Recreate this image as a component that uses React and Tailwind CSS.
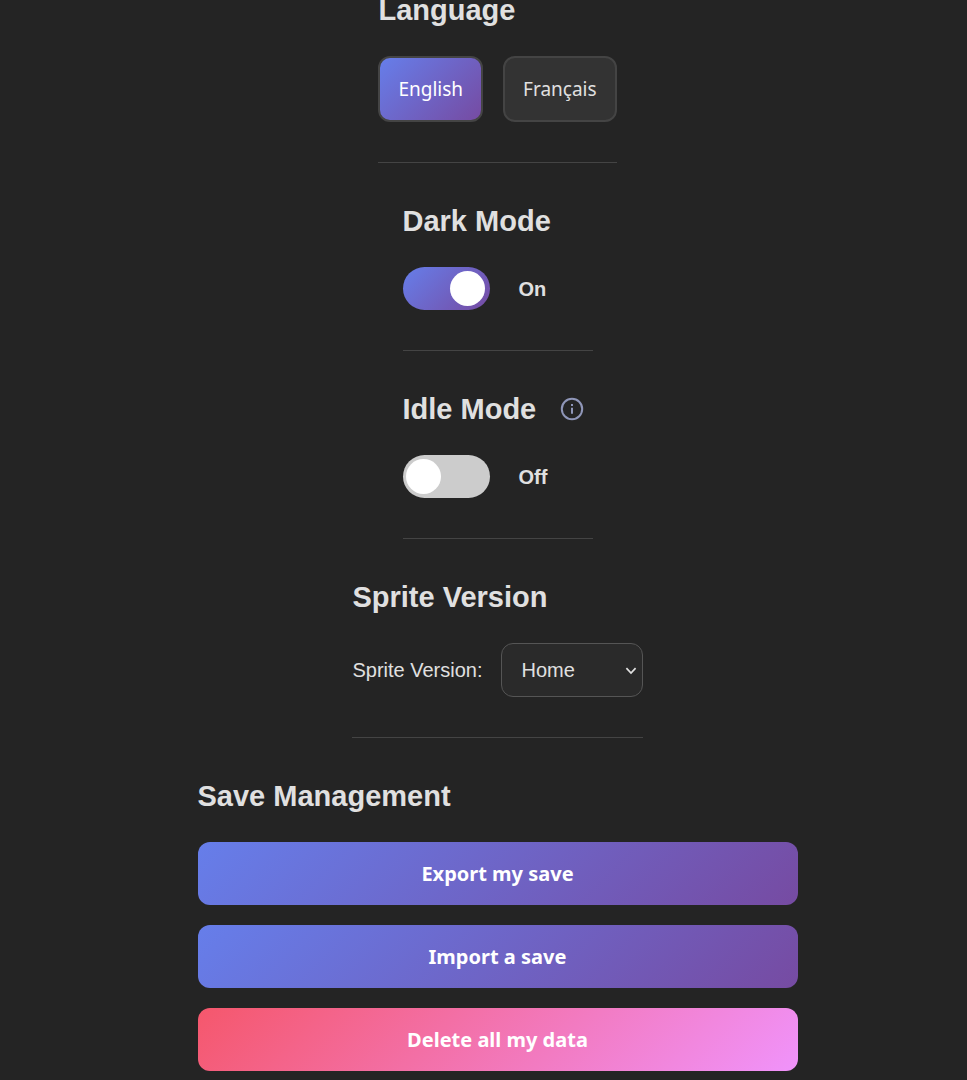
import React, { useState } from "react";

const Section = ({ title, info, last, className = "", children }) => (
  <section
    className={`max-w-full ${
      last ? "" : "mb-10 border-b border-[#444444] pb-10"
    } ${className}`}
  >
    <div className="mb-7 flex items-center gap-6">
      <h2 className="text-[29px] leading-9 font-bold">{title}</h2>
      {info}
    </div>
    {children}
  </section>
);

const Toggle = ({ label, checked, onChange }) => (
  <label className="flex cursor-pointer items-center gap-[29px]">
    <input
      type="checkbox"
      role="switch"
      aria-label={label}
      className="peer sr-only"
      checked={checked}
      onChange={(e) => onChange(e.target.checked)}
    />
    <span
      className={`flex h-[43px] w-[87px] items-center rounded-full pr-[5px] pl-[3px] peer-focus-visible:outline-2 ${
        checked
          ? "justify-end bg-[linear-gradient(135deg,#667eea_0%,#764ba2_100%)]"
          : "justify-start bg-[#cccccc]"
      }`}
    >
      <span className="size-[35px] rounded-full bg-white" />
    </span>
    <span className="text-[20px] leading-6 font-bold">
      {checked ? "On" : "Off"}
    </span>
  </label>
);

const languages = [
  { code: "en", label: "English" },
  { code: "fr", label: "Français" },
];

const saveActions = [
  { key: "export", label: "Export my save" },
  { key: "import", label: "Import a save" },
  { key: "delete", label: "Delete all my data", danger: true },
];

const InfoButton = () => (
  <button type="button" aria-label="About idle mode" className="text-[#8f96b8]">
    <svg
      className="size-6"
      viewBox="0 0 24 24"
      fill="none"
      stroke="currentColor"
      strokeWidth="2"
    >
      <circle cx="12" cy="12" r="10.2" />
      <path d="M12 10.8v6M12 7v2.1" />
    </svg>
  </button>
);

const App = () => {
  const [language, setLanguage] = useState("en");
  const [darkMode, setDarkMode] = useState(true);
  const [idleMode, setIdleMode] = useState(false);
  const [sprite, setSprite] = useState("home");

  return (
    <div className="min-h-screen overflow-hidden bg-[#242424] font-['Liberation_Sans',Arial,sans-serif] text-[#e0e0e0]">
      <main className="-mt-2 flex flex-col items-center pl-7">
        <Section title="Language">
          <div className="flex gap-5">
            {languages.map((lang) => (
              <button
                key={lang.code}
                type="button"
                aria-pressed={language === lang.code}
                onClick={() => setLanguage(lang.code)}
                className={`h-[66px] rounded-xl border-2 border-[#444444] px-[18px] font-['Noto_Sans',sans-serif] text-[19px] ${
                  language === lang.code
                    ? "bg-[linear-gradient(135deg,#667eea_0%,#764ba2_100%)] text-white"
                    : "bg-[#333333]"
                }`}
              >
                {lang.label}
              </button>
            ))}
          </div>
        </Section>

        <Section title="Dark Mode" className="min-w-[190px]">
          <Toggle label="Dark Mode" checked={darkMode} onChange={setDarkMode} />
        </Section>

        <Section title="Idle Mode" info={<InfoButton />} className="min-w-[190px]">
          <Toggle label="Idle Mode" checked={idleMode} onChange={setIdleMode} />
        </Section>

        <Section title="Sprite Version">
          <div className="flex items-center gap-[18px]">
            <label htmlFor="sprite" className="text-[20px]">
              Sprite Version:
            </label>
            <div className="relative">
              <select
                id="sprite"
                value={sprite}
                onChange={(e) => setSprite(e.target.value)}
                className="h-[54px] w-[142px] appearance-none rounded-xl border border-[#555555] bg-[#2a2a2a] px-5 text-[20px]"
              >
                <option value="home">Home</option>
                <option value="classic">Classic</option>
              </select>
              <svg
                className="pointer-events-none absolute top-6 right-1.5 h-2 w-3"
                viewBox="0 0 12 8"
                fill="none"
                stroke="currentColor"
                strokeWidth="1.7"
              >
                <path d="M1.4 1.2 6 6l4.6-4.8" />
              </svg>
            </div>
          </div>
        </Section>

        <Section title="Save Management" last className="w-[600px]">
          <div className="flex flex-col gap-5">
            {saveActions.map((action) => (
              <button
                key={action.key}
                type="button"
                className={`h-[63px] rounded-xl font-['Noto_Sans',sans-serif] text-[20px] font-bold text-white ${
                  action.danger
                    ? "bg-[linear-gradient(135deg,#f5576c_0%,#f093fb_100%)]"
                    : "bg-[linear-gradient(135deg,#667eea_0%,#764ba2_100%)]"
                }`}
              >
                {action.label}
              </button>
            ))}
          </div>
        </Section>
      </main>
    </div>
  );
};

export default App;
